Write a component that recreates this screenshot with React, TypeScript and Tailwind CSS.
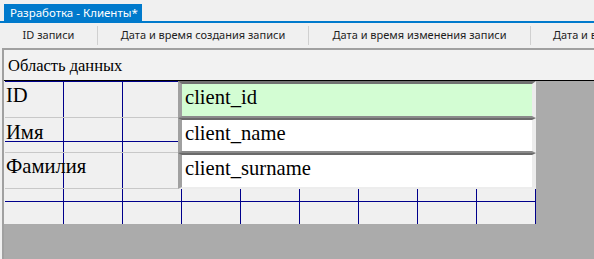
import React from "react";

const ui = { fontFamily: '"Noto Sans", "Open Sans", sans-serif' };
const serif = { fontFamily: '"Liberation Serif", "Times New Roman", serif' };

function Field({ text, bg, top, bottom, h }: { text: string; bg: string; top: string; bottom: string; h: string }) {
  return (
    <div className={`w-[358px] shrink-0 ${h} border-l-4 border-l-[#a0a0a0] border-r-4 border-r-[#ececec] ${top} ${bottom} ${bg}`}>
      <div className="pl-[3px] pt-[2px] text-[20.6px] leading-[23px] text-black whitespace-nowrap" style={serif}>
        {text}
      </div>
    </div>
  );
}

export default function App() {
  return (
    <div className="w-[594px] h-[259px] bg-[#f0f0f0] overflow-hidden flex flex-col">
      {/* tab strip */}
      <div className="pt-[4px] pl-[4px] border-b-2 border-[#007acc] flex">
        <div
          className="h-[17px] w-[138px] shrink-0 bg-[#007acc] text-white text-[11.5px] leading-[17px] pl-[6px] whitespace-nowrap"
          style={ui}
        >
          Разработка - Клиенты*
        </div>
      </div>

      {/* column header */}
      <div className="h-[25px] flex items-center text-[11px] text-[#1e1e1e] whitespace-nowrap overflow-hidden" style={ui}>
        <div className="w-[97px] shrink-0 text-center">ID записи</div>
        <div className="w-px shrink-0 h-[19px] bg-[#d0d0d0]" />
        <div className="w-[210px] shrink-0 text-center">Дата и время создания записи</div>
        <div className="w-px shrink-0 h-[19px] bg-[#d0d0d0]" />
        <div className="w-[221px] shrink-0 text-center">Дата и время изменения записи</div>
        <div className="w-px shrink-0 h-[19px] bg-[#d0d0d0]" />
        <div className="pl-[22px] shrink-0">Дата и в</div>
      </div>

      {/* data area */}
      <div className="flex-1 ml-[2px] border-l-2 border-t-2 border-[#a0a0a0] bg-[#ababab] flex flex-col">
        <div className="h-[31px] bg-[#f2f2f2] border-b border-b-black pl-[4px] pt-[6px]">
          <div className="text-[16.5px] leading-[20px] text-black" style={serif}>
            Область данных
          </div>
        </div>

        <div className="flex">
          <div className="w-[532px] shrink-0 h-[143px] border-l border-l-[#f0f0f0] bg-[#f0f0f0] bg-[linear-gradient(to_right,#00008b_1px,transparent_1px),linear-gradient(to_bottom,#00008b_1px,transparent_1px)] bg-[size:59px_60px] bg-[position:-1px_0px] flex flex-col">
            <div className="flex h-[37px]">
              <div className="w-[173px] shrink-0 border-b border-b-[#c8c8c8] pl-[1px] pt-[3px] text-[20.6px] leading-[23px] text-black" style={serif}>
                ID
              </div>
              <Field text="client_id" bg="bg-[#d3fdd3]" top="border-t-[3px] border-t-[#707070]" bottom="border-b-2 border-b-[#8a8a8a]" h="h-[37px]" />
            </div>
            <div className="flex h-[35px]">
              <div className="w-[173px] shrink-0 border-b border-b-[#c8c8c8] pl-[1px] pt-[3px] text-[20.6px] leading-[23px] text-black" style={serif}>
                Имя
              </div>
              <Field text="client_name" bg="bg-white" top="border-t-2 border-t-[#6a6a6a]" bottom="border-b-2 border-b-[#8a8a8a]" h="h-[35px]" />
            </div>
            <div className="flex h-[36px]">
              <div className="w-[173px] shrink-0 border-b border-b-[#c8c8c8] pl-[1px] pt-[2px] text-[20.6px] leading-[23px] text-black" style={serif}>
                Фамилия
              </div>
              <Field text="client_surname" bg="bg-white" top="border-t-2 border-t-[#6a6a6a]" bottom="border-b-2 border-b-[#ededed]" h="h-[36px]" />
            </div>
          </div>
          <div className="flex-1" />
        </div>
      </div>
    </div>
  );
}
